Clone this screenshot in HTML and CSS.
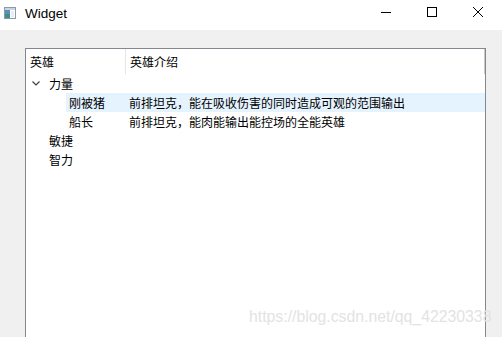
FILE: index.html
```html
<!DOCTYPE html>
<html lang="zh">
<head>
  <meta charset="UTF-8">
  <title>Widget</title>
  <link rel="stylesheet" href="styles.css">
</head>
<body>
  <!-- Titelleiste -->
  <div class="titlebar">
    <svg class="app-icon" width="12" height="12" viewBox="0 0 12 12">
      <rect x="0.5" y="0.5" width="11" height="11" fill="#fff" stroke="#8a9aa8"/>
      <rect x="1" y="1" width="10" height="2" fill="#c9d4dd"/>
      <rect x="1" y="3" width="5" height="8" fill="#3f8f86"/>
      <rect x="1" y="3" width="5" height="4" fill="#5a8fc0"/>
      <rect x="7" y="4" width="3" height="6" fill="#e8eef3"/>
    </svg>
    <span class="title">Widget</span>
    <div class="controls">
      <svg width="46" height="30" viewBox="0 0 46 30"><line x1="18" y1="12.5" x2="28" y2="12.5" stroke="#000"/></svg>
      <svg width="46" height="30" viewBox="0 0 46 30"><rect x="18.5" y="7.5" width="9" height="9" fill="none" stroke="#000"/></svg>
      <svg width="46" height="30" viewBox="0 0 46 30"><path d="M18 7 L28 17 M28 7 L18 17" stroke="#000"/></svg>
    </div>
  </div>

  <!-- Inhalt -->
  <div class="content">
    <div class="tree">
      <div class="tree-header">
        <div class="hcell first">英雄</div>
        <div class="hcell">英雄介绍</div>
        <div class="hend"></div>
      </div>

      <div class="row">
        <div class="branch lvl0">
          <svg width="8" height="5" viewBox="0 0 8 5"><polyline points="0.5,0.5 4,4 7.5,0.5" fill="none" stroke="#404040" stroke-width="1.2"/></svg>
        </div>
        <div class="item">
          <div class="name w0">力量</div>
          <div class="desc"></div>
        </div>
      </div>

      <div class="row">
        <div class="branch lvl1"></div>
        <div class="item selected">
          <div class="name w1">刚被猪</div>
          <div class="desc">前排坦克，能在吸收伤害的同时造成可观的范围输出</div>
        </div>
      </div>

      <div class="row">
        <div class="branch lvl1"></div>
        <div class="item">
          <div class="name w1">船长</div>
          <div class="desc">前排坦克，能肉能输出能控场的全能英雄</div>
        </div>
      </div>

      <div class="row">
        <div class="branch lvl0"></div>
        <div class="item">
          <div class="name w0">敏捷</div>
          <div class="desc"></div>
        </div>
      </div>

      <div class="row">
        <div class="branch lvl0"></div>
        <div class="item">
          <div class="name w0">智力</div>
          <div class="desc"></div>
        </div>
      </div>
    </div>
  </div>

  <div class="watermark">https://blog.csdn.net/qq_42230338</div>
</body>
</html>
```

FILE: styles.css
```css
* {
  margin: 0;
  padding: 0;
  box-sizing: border-box;
}

body {
  width: 502px;
  height: 337px;
  overflow: hidden;
  background: #f0f0f0;
  font-family: "Noto Sans CJK SC", "Liberation Sans", sans-serif;
  font-size: 12px;
  color: #000;
  position: relative;
}

/* Titelleiste */
.titlebar {
  height: 30px;
  background: #fff;
  display: flex;
  align-items: center;
}

.app-icon {
  margin-left: 4px;
  margin-top: -4px;
}

.title {
  margin-left: 9px;
  margin-top: -3px;
  font-family: "Liberation Sans", sans-serif;
  font-size: 13.5px;
}

.controls {
  margin-left: auto;
  display: flex;
  align-self: flex-start;
  margin-right: 1px;
}

/* Inhalt */
.content {
  padding: 18px 0 0 25px;
  height: 307px;
}

.tree {
  width: 461px;
  height: 300px;
  background: #fff;
  border: 1px solid #828790;
  border-bottom: none;
}

.tree-header {
  display: flex;
  height: 25px;
}

.hcell {
  padding-left: 4px;
  line-height: 25px;
  border-right: 1px solid #e5e5e5;
}

.hcell.first {
  width: 100px;
}

.hcell:nth-child(2) {
  flex: 1;
  border-right: none;
}

.hend {
  width: 1px;
  background: #c8c8c8;
}

/* Zeilen */
.row {
  display: flex;
  height: 19px;
}

.branch {
  display: flex;
  align-items: center;
  justify-content: center;
}

.branch.lvl0 {
  width: 20px;
}

.branch.lvl1 {
  width: 40px;
}

.item {
  flex: 1;
  display: flex;
  line-height: 19px;
}

.item.selected {
  background: #e5f3ff;
}

.name {
  padding-left: 3px;
  white-space: nowrap;
}

.name.w0 {
  width: 80px;
}

.name.w1 {
  width: 60px;
}

.desc {
  padding-left: 3px;
  white-space: nowrap;
}

/* Wasserzeichen */
.watermark {
  position: absolute;
  left: 249px;
  top: 308px;
  font-family: "Liberation Sans", sans-serif;
  font-size: 15.8px;
  color: #e3e3e3;
}
```
